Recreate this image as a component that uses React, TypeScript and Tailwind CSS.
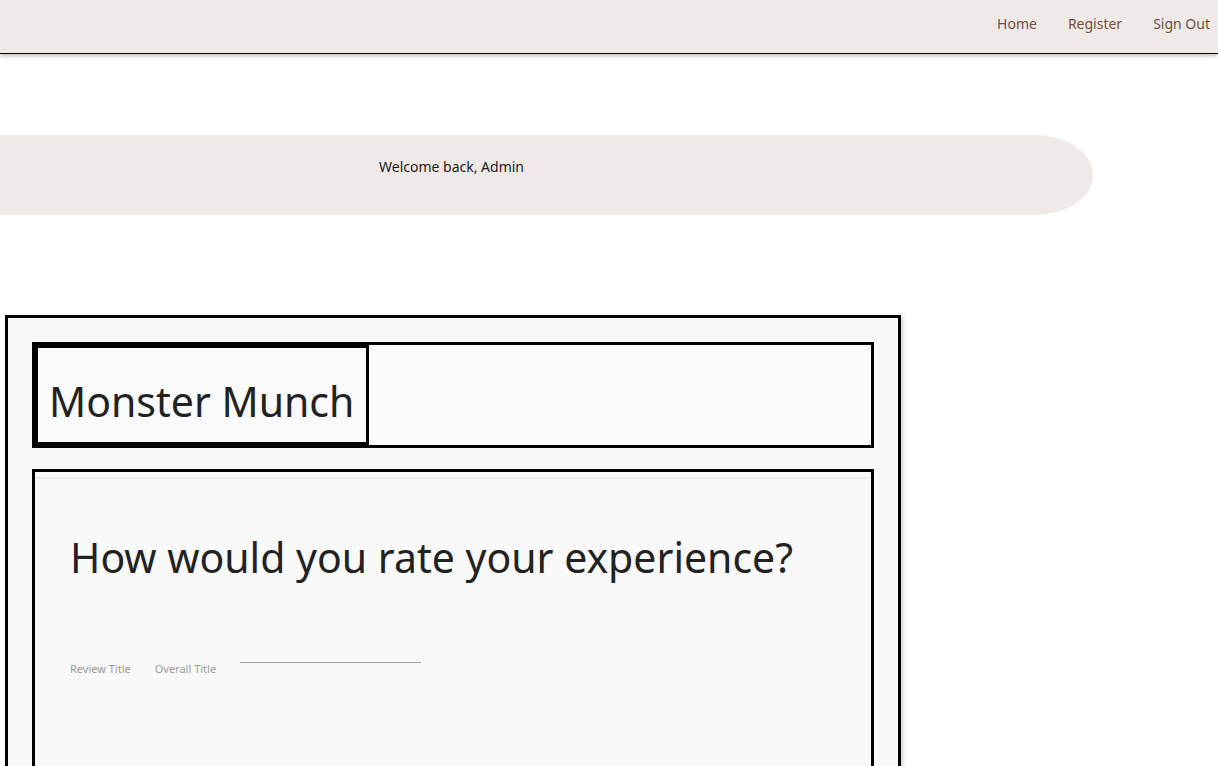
import { ReactNode } from 'react';

const NAV_LINKS = ['Home', 'Register', 'Sign Out'];

function Box({ children, className = '' }: { children: ReactNode; className?: string }) {
  return <div className={`border-[3px] border-black ${className}`}>{children}</div>;
}

export default function App() {
  return (
    <div className="min-h-screen w-full bg-white font-['Noto_Sans',sans-serif] overflow-hidden">
      {/* Top nav */}
      <header className="h-[54px] bg-[#efeae7] border-b border-black shadow-[0_2px_4px_rgba(0,0,0,0.25)] flex items-center justify-end pr-[8px] pb-[6px]">
        <nav className="flex items-center gap-[31px] text-[14px] text-[#6e4f44]">
          {NAV_LINKS.map((link) => (
            <a key={link} href="#" className="leading-none">
              {link}
            </a>
          ))}
        </nav>
      </header>

      {/* Welcome banner */}
      <section className="mt-[81px] w-[1093px] h-[80px] bg-[#efeae7] rounded-tr-[58px_40px] rounded-br-[58px_40px] flex items-center pl-[379px] pb-[17px]">
        <span className="text-[14px] text-[#1a1a1a]">Welcome back, Admin</span>
      </section>

      {/* Review card */}
      <main className="mt-[100px] ml-[5px] w-[896px] h-[480px] border-[3px] border-black bg-[#f9f9f9] shadow-[2px_2px_4px_rgba(0,0,0,0.2)] p-6">
        <Box className="h-[106px] flex bg-[#fafafa]">
          <div className="border-[3px] border-black h-full flex items-center pl-[11px] pr-3 pt-[12px]">
            <h1 className="text-[41px] leading-none text-[#222] whitespace-nowrap">Monster Munch</h1>
          </div>
        </Box>

        <Box className="mt-[21px] h-[400px]">
          <div className="mt-[5px] border-t-2 border-[#ececec] px-[35px]">
            <h2 className="mt-[58px] text-[41px] leading-none text-[#222] whitespace-nowrap">How would you rate your experience?</h2>
            <div className="mt-[83px] flex items-start text-[11px] text-[#9a9a9a]">
              <span>Review Title</span>
              <span className="ml-[24px]">Overall Title</span>
              <div className="ml-[24px] w-[181px] border-t border-[#a0a0a0] mt-[1px]" />
            </div>
          </div>
        </Box>
      </main>
    </div>
  );
}
